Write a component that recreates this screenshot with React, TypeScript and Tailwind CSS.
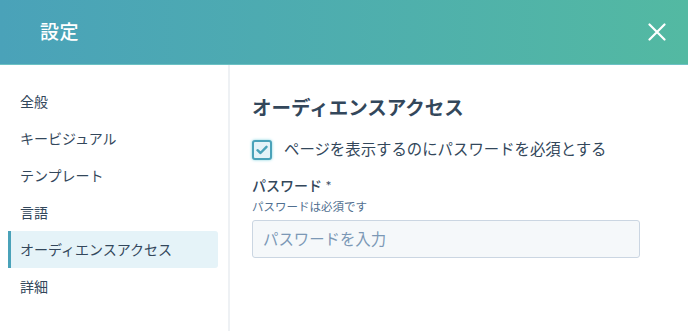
import { useState } from 'react';

const navItems = ['全般', 'キービジュアル', 'テンプレート', '言語', 'オーディエンスアクセス', '詳細'];

export default function App() {
  const [active, setActive] = useState(4);
  const [required, setRequired] = useState(true);

  return (
    <div
      className="w-[688px] h-[331px] bg-white flex flex-col overflow-hidden text-[#33475b]"
      style={{ fontFamily: '"Lato", "Noto Sans CJK JP", sans-serif' }}
    >
      {/* Header */}
      <div className="h-[65px] shrink-0 flex items-center justify-between pl-[40px] pr-[20px] bg-gradient-to-r from-[#4aa2b9] to-[#53b9a2] border-b border-[#6cc1c4]">
        <h1 className="text-[19px] font-medium text-white tracking-wide">設定</h1>
        <button aria-label="閉じる" className="w-[22px] h-[22px] flex items-center justify-center">
          <svg width="18" height="18" viewBox="0 0 18 18" fill="none">
            <path d="M1.5 1.5L16.5 16.5M16.5 1.5L1.5 16.5" stroke="white" strokeWidth="2.2" strokeLinecap="round" />
          </svg>
        </button>
      </div>

      <div className="flex flex-1 min-h-0">
        {/* Sidebar */}
        <nav className="w-[230px] shrink-0 border-r-2 border-[#eef1f4] pt-[18px] pl-[8px] pr-[10px] flex flex-col">
          {navItems.map((item, i) => (
            <button
              key={item}
              onClick={() => setActive(i)}
              className={
                i === active
                  ? 'h-[37px] flex items-center pl-[9px] text-left text-[14px] bg-[#e5f3f8] border-l-[3px] border-[#4aa2b9] rounded-r-[3px]'
                  : 'h-[37px] flex items-center pl-[12px] text-left text-[14px]'
              }
            >
              {item}
            </button>
          ))}
        </nav>

        {/* Content */}
        <main className="flex-1 pl-[22px] pr-[48px] pt-[29px]">
          <h2 className="text-[19.5px] font-bold leading-[28px]">オーディエンスアクセス</h2>

          <label className="mt-[16px] flex items-center gap-[12px] cursor-pointer">
            <span
              onClick={() => setRequired(!required)}
              className="w-[20px] h-[20px] rounded-[3px] border-2 border-[#4aa2b9] bg-[#e5f3f8] flex items-center justify-center shadow-[0_0_3px_#7fd1de]"
            >
              {required && (
                <svg width="12" height="10" viewBox="0 0 12 10" fill="none">
                  <path d="M1.5 5.2L4.5 8L10.5 1.8" stroke="#4aa2b9" strokeWidth="2.4" strokeLinecap="round" strokeLinejoin="round" />
                </svg>
              )}
            </span>
            <span className="text-[15.4px]">ページを表示するのにパスワードを必須とする</span>
          </label>

          <div className="mt-[14px]">
            <div className="text-[14px] font-medium leading-[22px]">パスワード *</div>
            <div className="text-[11.5px] text-[#516f90] leading-[18px] mt-[1px]">パスワードは必須です</div>
            <input
              placeholder="パスワードを入力"
              className="mt-[4px] w-[388px] h-[38px] px-[10px] bg-[#f5f8fa] border border-[#cbd6e2] rounded-[3px] text-[15.4px] placeholder:text-[#7c98b6] outline-none"
            />
          </div>
        </main>
      </div>
    </div>
  );
}
